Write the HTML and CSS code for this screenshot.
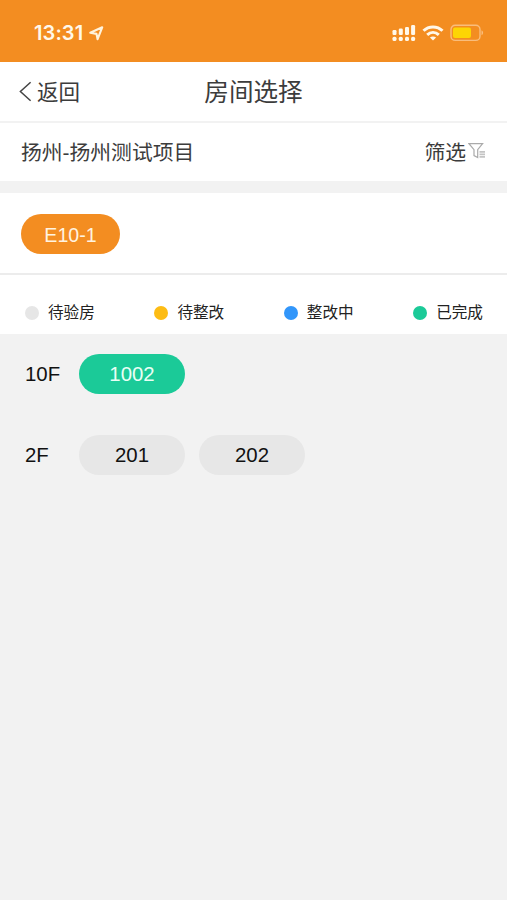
FILE: index.html
```
<!DOCTYPE html>
<html lang="zh-CN">
<head>
    <meta charset="UTF-8">
    <meta name="viewport" content="width=device-width, initial-scale=1.0">
    <title>房间选择</title>
    <link rel="stylesheet" href="styles.css">
</head>
<body>
    <div class="status-bar">
        <span class="time">13:31</span>
        <svg class="location" width="15" height="15" viewBox="0 0 15 15">
            <path d="M1.3 6.8 L13.2 1.3 L8.6 13.2 L7.5 7.9 Z" fill="none" stroke="#fff3dc" stroke-width="2.1" stroke-linejoin="round"/>
        </svg>
        <div class="status-icons">
            <svg width="24" height="18" viewBox="0 0 24 18" fill="#fff8ea">
                <rect x="0.5" y="6" width="4" height="5" rx="1.2"/>
                <rect x="6.8" y="4.5" width="4" height="6.5" rx="1.2"/>
                <rect x="13" y="3" width="4" height="8" rx="1.2"/>
                <rect x="19.1" y="1" width="4" height="10" rx="1.2"/>
                <rect x="0.5" y="12.7" width="4" height="4.3" rx="1.6"/>
                <rect x="6.8" y="12.7" width="4" height="4.3" rx="1.6"/>
                <rect x="13" y="12.7" width="4" height="4.3" rx="1.6"/>
                <rect x="19.1" y="12.7" width="4" height="4.3" rx="1.6"/>
            </svg>
            <svg class="wifi" width="22" height="18" viewBox="0 0 22 18" fill="none" stroke="#fff8ea" stroke-width="3">
                <path d="M1.5 6.8 C6.8 1.6 15.2 1.6 20.5 6.8"/>
                <path d="M5.2 10.9 C8.6 7.8 13.4 7.8 16.8 10.9"/>
                <path d="M11 16.6 L7.9 13.6 C9.7 12 12.3 12 14.1 13.6 Z" fill="#fff8ea" stroke="none"/>
            </svg>
            <svg class="battery" width="34" height="18" viewBox="0 0 34 18">
                <rect x="1" y="1.2" width="29" height="15.2" rx="4.2" fill="none" stroke="#f9bd7c" stroke-width="1.4"/>
                <rect x="3" y="3.5" width="18" height="10.6" rx="2" fill="#fdd504"/>
                <path d="M31.5 6.3 C33.6 7.2 33.6 10.4 31.5 11.3 Z" fill="#f9bd7c"/>
            </svg>
        </div>
    </div>

    <div class="header">
        <div class="back">
            <svg width="14" height="22" viewBox="0 0 14 22">
                <path d="M11.6 2.3 L1.4 11.5 L11.6 20.7" fill="none" stroke="#444" stroke-width="1.5"/>
            </svg>
            <span>返回</span>
        </div>
        <h1>房间选择</h1>
    </div>

    <div class="project">
        <span>扬州-扬州测试项目</span>
        <div class="filter">
            <span>筛选</span>
            <svg width="18" height="18" viewBox="0 0 18 18">
                <path d="M1 1.7 H14.6 L9.7 7.6 V15.6 L6 13.6 V7.6 Z" fill="none" stroke="#aaa" stroke-width="1.2"/>
                <path d="M11.5 9.8 H17 M11.5 12.3 H17 M11.5 14.8 H17" stroke="#c4c4c4" stroke-width="1.8"/>
            </svg>
        </div>
    </div>

    <div class="buildings">
        <span class="pill building">E10-1</span>
    </div>

    <div class="legend">
        <div class="legend-item"><i class="dot waiting"></i>待验房</div>
        <div class="legend-item"><i class="dot todo"></i>待整改</div>
        <div class="legend-item"><i class="dot doing"></i>整改中</div>
        <div class="legend-item"><i class="dot done"></i>已完成</div>
    </div>

    <div class="floors">
        <div class="floor">
            <span class="floor-name">10F</span>
            <span class="pill room done">1002</span>
        </div>
        <div class="floor">
            <span class="floor-name">2F</span>
            <span class="pill room">201</span>
            <span class="pill room">202</span>
        </div>
    </div>
</body>
</html>
```
FILE: styles.css
```
* {
    box-sizing: border-box;
}
body {
    margin: 0;
    min-height: 100vh;
    background-color: #f2f2f2;
    color: #3c3c3c;
    font-family: "Liberation Sans", "Noto Sans CJK SC", sans-serif;
    font-size: 20.8px;
}
svg {
    display: block;
}
.status-bar {
    display: flex;
    align-items: center;
    height: 62px;
    padding: 4px 23px 0 34px;
    background-color: #f38d21;
}
.time {
    width: 52px;
    color: #fff8ea;
    font-family: Inter, sans-serif;
    font-size: 20px;
    font-weight: 600;
    line-height: 24px;
    letter-spacing: 0.1px;
}
.location {
    margin-left: 3px;
}
.status-icons {
    display: flex;
    align-items: center;
    margin-left: auto;
}
.wifi {
    margin-left: 6px;
}
.battery {
    margin-left: 6px;
}
.header {
    position: relative;
    display: flex;
    align-items: center;
    justify-content: center;
    height: 61px;
    padding-bottom: 2px;
    background-color: #fff;
    border-bottom: 2px solid #f2f2f2;
}
.back {
    position: absolute;
    left: 19px;
    display: flex;
    align-items: center;
    gap: 4px;
    font-size: 21.5px;
}
h1 {
    margin: 0 0 2px;
    font-size: 24.6px;
    font-weight: normal;
}
.project {
    display: flex;
    align-items: center;
    justify-content: space-between;
    height: 70px;
    padding: 0 21px 2px;
    background-color: #fff;
    border-bottom: 12px solid #f2f2f2;
}
.filter {
    display: flex;
    align-items: center;
    gap: 2px;
}
.buildings {
    display: flex;
    align-items: center;
    height: 82px;
    padding: 2px 21px 0;
    background-color: #fff;
    border-bottom: 2px solid #ececec;
}
.pill {
    height: 40px;
    border-radius: 20px;
    line-height: 41px;
    text-align: center;
}
.building {
    width: 99px;
    background-color: #f38d21;
    color: #fff3e0;
    font-size: 19.6px;
    line-height: 42px;
}
.legend {
    display: flex;
    justify-content: space-between;
    align-items: center;
    height: 59px;
    padding: 16px 24px 0 25px;
    background-color: #fff;
    color: #222;
    font-size: 15.6px;
}
.legend-item {
    display: flex;
    align-items: center;
    gap: 9px;
    line-height: 22px;
}
.dot {
    width: 14px;
    height: 14px;
    border-radius: 50%;
}
.waiting {
    background-color: #e6e6e6;
}
.todo {
    background-color: #fdbc14;
}
.doing {
    background-color: #3296fa;
}
.done {
    background-color: #1bca98;
}
.floors {
    padding: 20px 25px;
    color: #111;
    font-size: 20.4px;
}
.floor {
    display: flex;
    align-items: center;
    margin-bottom: 41px;
}
.floor-name {
    width: 54px;
    line-height: 41px;
    height: 40px;
}
.room {
    width: 106px;
    margin-right: 14px;
    background-color: #e7e7e7;
}
.room.done {
    background-color: #1bca98;
    color: #e9fff5;
}
```
